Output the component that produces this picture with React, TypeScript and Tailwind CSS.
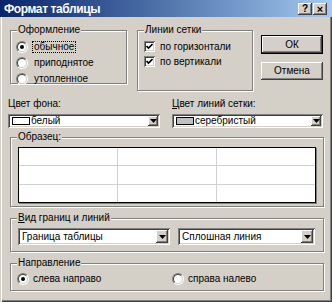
import React from "react";

const raised =
  "bg-[#d4d0c8] shadow-[inset_-1px_-1px_0_#404040,inset_1px_1px_0_#ffffff,inset_-2px_-2px_0_#808080,inset_2px_2px_0_#d4d0c8]";
const sunken =
  "shadow-[inset_1px_1px_0_#808080,inset_-1px_-1px_0_#ffffff,inset_2px_2px_0_#404040,inset_-2px_-2px_0_#d4d0c8]";
const group =
  "border border-[#808080] shadow-[inset_1px_1px_0_#ffffff,1px_1px_0_#ffffff] min-w-0";
const legend = "ml-[6px] px-[1px] bg-[#d4d0c8] leading-[12px]";

function Radio({ checked }: { checked?: boolean }) {
  return (
    <span className="w-[12px] h-[12px] shrink-0 rounded-full border border-t-[#808080] border-l-[#808080] border-b-white border-r-white">
      <span className="w-full h-full flex items-center justify-center rounded-full bg-white border border-t-[#404040] border-l-[#404040] border-b-[#d4d0c8] border-r-[#d4d0c8]">
        {checked && <span className="w-[4px] h-[4px] rounded-full bg-black" />}
      </span>
    </span>
  );
}

function Check() {
  return (
    <span className={`w-[11px] h-[11px] shrink-0 bg-white flex items-center justify-center ${sunken}`}>
      <svg width="7" height="7" viewBox="0 0 7 7">
        <path d="M0.5 3 L2.5 5 L6.5 1" fill="none" stroke="#000" strokeWidth="1.6" />
      </svg>
    </span>
  );
}

function Arrow() {
  return (
    <svg width="7" height="4" viewBox="0 0 7 4">
      <path d="M0 0 H7 L3.5 4 Z" fill="#000" />
    </svg>
  );
}

function Combo({
  text,
  width,
  swatch,
  small,
}: {
  text: string;
  width: string;
  swatch?: React.ReactNode;
  small?: boolean;
}) {
  return (
    <div
      className={`${width} ${small ? "h-[14px]" : "h-[17px]"} bg-white flex items-center p-[2px] ${sunken}`}
    >
      <div className="flex-1 flex items-center gap-[1px] pl-[2px] overflow-hidden whitespace-nowrap">
        {swatch}
        <span>{text}</span>
      </div>
      <div
        className={`${small ? "w-[10px] h-[10px]" : "w-[12px] h-[13px]"} flex items-center justify-center ${raised}`}
      >
        <Arrow />
      </div>
    </div>
  );
}

export default function App() {
  return (
    <div className="w-[332px] h-[302px] flex flex-col bg-[#d4d0c8] text-black text-[10px] leading-[12px] font-['Liberation_Sans',Arial,sans-serif] overflow-hidden">
      {/* title bar */}
      <div className="h-[17px] shrink-0 flex items-center justify-between pl-[4px] pr-[5px] bg-linear-to-r from-[#0a246a] to-[#a6caf0]">
        <span className="text-white font-bold text-[12px] tracking-[-0.4px]">Формат таблицы</span>
        <div className="flex gap-[1px]">
          <div className={`w-[14px] h-[12px] flex items-center justify-center font-bold text-[10px] ${raised}`}>?</div>
          <div className={`w-[14px] h-[12px] flex items-center justify-center font-bold text-[11px] ${raised}`}>×</div>
        </div>
      </div>

      <div className="flex-1 flex flex-col px-[8px] pt-[7px] shadow-[inset_1px_0_0_#d4d0c8,inset_2px_0_0_#ffffff,inset_-1px_-1px_0_#404040,inset_-2px_-2px_0_#808080]">
        {/* row 1 */}
        <div className="flex items-start pl-[2px]">
          <fieldset className={`w-[117px] h-[60px] ${group}`}>
            <legend className={legend}>Оформление</legend>
            <div className="flex flex-col pl-[5px] pt-[3px]">
              <div className="h-[16px] flex items-center gap-[4px]">
                <Radio checked />
                <span className="border border-dotted border-black px-[1px] leading-[10px]">обычное</span>
              </div>
              <div className="h-[16px] flex items-center gap-[4px]">
                <Radio />
                <span className="pl-[2px]">приподнятое</span>
              </div>
              <div className="h-[16px] flex items-center gap-[4px]">
                <Radio />
                <span className="pl-[2px]">утопленное</span>
              </div>
            </div>
          </fieldset>

          <fieldset className={`w-[116px] h-[67px] ml-[10px] ${group}`}>
            <legend className={legend}>Линии сетки</legend>
            <div className="flex flex-col pl-[6px] pt-[3px]">
              <div className="h-[15px] flex items-center gap-[5px]">
                <Check />
                <span>по горизонтали</span>
              </div>
              <div className="h-[15px] flex items-center gap-[5px]">
                <Check />
                <span>по вертикали</span>
              </div>
            </div>
          </fieldset>

          <div className="ml-[8px] mt-[11px] flex flex-col gap-[8px]">
            <div className="w-[62px] h-[19px] border border-black">
              <div className={`w-full h-full flex items-center justify-center ${raised}`}>ОК</div>
            </div>
            <div className={`w-[62px] h-[18px] flex items-center justify-center ${raised}`}>Отмена</div>
          </div>
        </div>

        {/* row 2 */}
        <div className="flex mt-[7px] gap-[12px]">
          <div className="flex flex-col gap-[4px]">
            <span>Цвет фона:</span>
            <Combo
              small
              width="w-[152px]"
              text="белый"
              swatch={<span className="w-[18px] h-[8px] border border-black bg-white" />}
            />
          </div>
          <div className="flex flex-col gap-[4px]">
            <span>
              <span className="underline">Ц</span>вет линий сетки:
            </span>
            <Combo
              small
              width="w-[151px]"
              text="серебристый"
              swatch={<span className="w-[18px] h-[8px] border border-black bg-[#c0c0c0]" />}
            />
          </div>
        </div>

        {/* sample */}
        <fieldset className={`ml-[2px] mt-[3px] w-[314px] h-[76px] ${group}`}>
          <legend className={legend}>Образец:</legend>
          <div className="pl-[7px] pt-[4px]">
            <div className="w-[298px] h-[56px] border border-black bg-white shadow-[1px_1px_0_#808080]">
              <div className="w-full h-full grid grid-cols-3 grid-rows-3 gap-px bg-[#d0d0d0]">
                {Array.from({ length: 9 }).map((_, i) => (
                  <div key={i} className="bg-white" />
                ))}
              </div>
            </div>
          </div>
        </fieldset>

        {/* border kind */}
        <fieldset className={`ml-[2px] mt-[5px] w-[314px] h-[40px] ${group}`}>
          <legend className={legend}>
            <span className="underline">В</span>ид границ и линий
          </legend>
          <div className="flex gap-[8px] pl-[7px] pt-[4px]">
            <Combo width="w-[152px]" text="Граница таблицы" />
            <Combo width="w-[137px]" text="Сплошная линия" />
          </div>
        </fieldset>

        {/* direction */}
        <fieldset className={`ml-[2px] mt-[5px] w-[314px] h-[34px] ${group}`}>
          <legend className={legend}>Направление</legend>
          <div className="flex pl-[6px] pt-[2px]">
            <div className="w-[155px] h-[16px] flex items-center gap-[4px]">
              <Radio checked />
              <span>слева направо</span>
            </div>
            <div className="h-[16px] flex items-center gap-[4px]">
              <Radio />
              <span>справа налево</span>
            </div>
          </div>
        </fieldset>
      </div>
    </div>
  );
}
